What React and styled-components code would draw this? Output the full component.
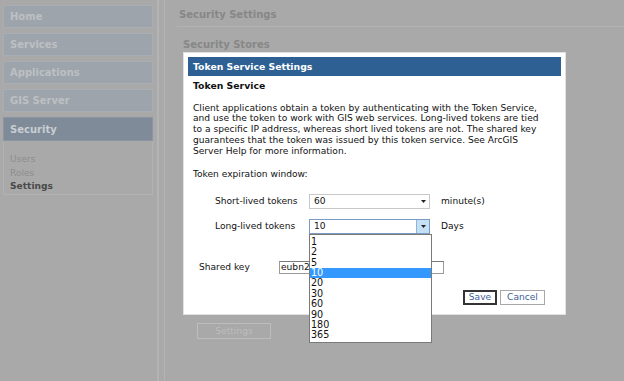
import React from "react";
import styled, { createGlobalStyle } from "styled-components";

const Global = createGlobalStyle`
  html, body { margin: 0; padding: 0; background: #a9a9a9; }
  body { font-family: "DejaVu Sans", Verdana, sans-serif; }
  #root { width: 624px; height: 381px; overflow: hidden; }
`;

const Page = styled.div`
  position: relative;
  width: 624px;
  height: 381px;
  display: flex;
  background: #a9a9a9;
  font-size: 9.1px;
  color: #111;
`;

const Sidebar = styled.nav`
  width: 159px;
  padding: 5px 4px 0 3px;
  box-sizing: border-box;
  display: flex;
  flex-direction: column;
  gap: 5px;
  border-right: 2px solid #b4b4b4;
`;

const NavItem = styled.div`
  height: ${(p) => (p.$active ? 24 : 23)}px;
  box-sizing: border-box;
  background: ${(p) => (p.$active ? "#7f8b98" : "#9ea4ab")};
  border: 1px solid ${(p) => (p.$active ? "#8a95a1" : "#a9aeb4")};
  color: ${(p) => (p.$active ? "#c9ced3" : "#bcc0c4")};
  font-weight: bold;
  font-size: 10px;
  display: flex;
  align-items: center;
  padding-left: 6px;
`;

const SubMenu = styled.div`
  margin-top: -5px;
  height: 54px;
  box-sizing: border-box;
  border: 1px solid #b2b2b2;
  border-top: none;
  padding: 12px 0 0 6px;
  display: flex;
  flex-direction: column;
  line-height: 13.5px;
`;

const SubItem = styled.div`
  color: ${(p) => (p.$current ? "#4a4a4a" : "#8e8e8e")};
  font-weight: ${(p) => (p.$current ? "bold" : "normal")};
`;

const Divider = styled.div`
  width: 3px;
  margin-left: 2px;
  border-right: 1px solid #b4b4b4;
`;

const Main = styled.main`
  flex: 1;
  padding: 9px 0 0 12px;
  display: flex;
  flex-direction: column;
`;

const PageTitle = styled.div`
  color: #878787;
  font-weight: bold;
  font-size: 10px;
  padding: 0 0 6px 2px;
  border-bottom: 1px solid #b3b3b3;
`;

const SectionTitle = styled.div`
  color: #878787;
  font-weight: bold;
  font-size: 10px;
  margin: 12px 0 0 6px;
`;

const GhostButton = styled.div`
  margin: 273px 0 0 20px;
  width: 72px;
  height: 14px;
  border: 1px solid #bdbdbd;
  color: #bdbdbd;
  display: flex;
  align-items: center;
  justify-content: center;
`;

const Dialog = styled.div`
  position: absolute;
  left: 183px;
  top: 52px;
  width: 383px;
  height: 263px;
  box-sizing: border-box;
  background: #fff;
  border: 1px solid #e2e2e2;
  padding: 4px 4px 0 4px;
`;

const TitleBar = styled.div`
  height: 19px;
  background: #2e6094;
  color: #fff;
  font-weight: bold;
  font-size: 9.3px;
  display: flex;
  align-items: center;
  padding-left: 5px;
`;

const Body = styled.div`
  padding: 5px 0 0 5px;
  line-height: 10.7px;
`;

const Heading = styled.div`
  font-weight: bold;
  font-size: 9.3px;
`;

const Para = styled.p`
  margin: ${(p) => p.$mt}px 0 0 0;
  white-space: nowrap;
`;

const Row = styled.div`
  display: flex;
  align-items: center;
  height: 15px;
  margin-top: ${(p) => p.$mt}px;
  padding-left: ${(p) => p.$indent}px;
`;

const Label = styled.span`
  width: ${(p) => p.$w}px;
`;

const SelectBox = styled.div`
  position: relative;
  width: 121px;
  height: 15px;
  box-sizing: border-box;
  border: 1px solid ${(p) => (p.$open ? "#7a9cc4" : "#c8c8c8")};
  background: #fff;
  display: flex;
  align-items: center;
  padding-left: 4px;
`;

const Arrow = styled.span`
  position: absolute;
  right: 0;
  top: 0;
  bottom: 0;
  width: 12px;
  display: flex;
  align-items: center;
  justify-content: center;
  background: ${(p) => (p.$open ? "#c5e0f5" : "transparent")};
  border-left: 1px solid ${(p) => (p.$open ? "#8eb6dc" : "transparent")};
`;

const Unit = styled.span`
  margin-left: 11px;
`;

const List = styled.div`
  position: absolute;
  left: -1px;
  top: 14px;
  width: 121px;
  border: 1px solid #7a7a7a;
  background: #fff;
  z-index: 5;
  padding: 2px 0 1px;
`;

const Option = styled.div`
  height: 10.4px;
  line-height: 10.4px;
  font-size: 9.6px;
  padding-left: 1px;
  background: ${(p) => (p.$sel ? "#3399ff" : "transparent")};
  color: ${(p) => (p.$sel ? "#fff" : "#111")};
`;

const TextInput = styled.div`
  width: 165px;
  height: 13px;
  border: 1px solid #9a9a9a;
  border-top-color: #7a7a7a;
  background: #fff;
  display: flex;
  align-items: center;
  padding-left: 1px;
  box-sizing: border-box;
`;

const Actions = styled.div`
  display: flex;
  justify-content: flex-end;
  gap: 3px;
  margin: 15px 16px 0 0;
`;

const Btn = styled.div`
  height: 15px;
  width: ${(p) => p.$w}px;
  box-sizing: border-box;
  border: ${(p) => (p.$default ? "2px solid #333" : "1px solid #a8a8a8")};
  background: #fff;
  color: #3d5f9a;
  display: flex;
  align-items: center;
  justify-content: center;
`;

const Caret = () => (
  <svg width="7" height="5" viewBox="0 0 7 5">
    <path d="M1 1 L6 1 L3.5 4 Z" fill="#222" />
  </svg>
);

const options = ["1", "2", "5", "10", "20", "30", "60", "90", "180", "365"];

export default function App() {
  return (
    <>
      <Global />
      <Page>
        <Sidebar>
          <NavItem>Home</NavItem>
          <NavItem>Services</NavItem>
          <NavItem>Applications</NavItem>
          <NavItem>GIS Server</NavItem>
          <NavItem $active>Security</NavItem>
          <SubMenu>
            <SubItem>Users</SubItem>
            <SubItem>Roles</SubItem>
            <SubItem $current>Settings</SubItem>
          </SubMenu>
        </Sidebar>
        <Divider />
        <Main>
          <PageTitle>Security Settings</PageTitle>
          <SectionTitle>Security Stores</SectionTitle>
          <GhostButton>Settings</GhostButton>
        </Main>

        <Dialog>
          <TitleBar>Token Service Settings</TitleBar>
          <Body>
            <Heading>Token Service</Heading>
            <Para $mt={11}>
              Client applications obtain a token by authenticating with the Token Service,
              <br />
              and use the token to work with GIS web services. Long-lived tokens are tied
              <br />
              to a specific IP address, whereas short lived tokens are not. The shared key
              <br />
              guarantees that the token was issued by this token service. See ArcGIS
              <br />
              Server Help for more information.
            </Para>
            <Para $mt={13}>Token expiration window:</Para>
            <Row $mt={14} $indent={22}>
              <Label $w={94}>Short-lived tokens</Label>
              <SelectBox>
                60
                <Arrow>
                  <Caret />
                </Arrow>
              </SelectBox>
              <Unit>minute(s)</Unit>
            </Row>
            <Row $mt={10} $indent={22}>
              <Label $w={94}>Long-lived tokens</Label>
              <SelectBox $open>
                10
                <Arrow $open>
                  <Caret />
                </Arrow>
                <List>
                  {options.map((o) => (
                    <Option key={o} $sel={o === "10"}>
                      {o}
                    </Option>
                  ))}
                </List>
              </SelectBox>
              <Unit>Days</Unit>
            </Row>
            <Row $mt={26} $indent={6}>
              <Label $w={80}>Shared key</Label>
              <TextInput>eubn2</TextInput>
            </Row>
            <Actions>
              <Btn $default $w={34}>Save</Btn>
              <Btn $w={45}>Cancel</Btn>
            </Actions>
          </Body>
        </Dialog>
      </Page>
    </>
  );
}
